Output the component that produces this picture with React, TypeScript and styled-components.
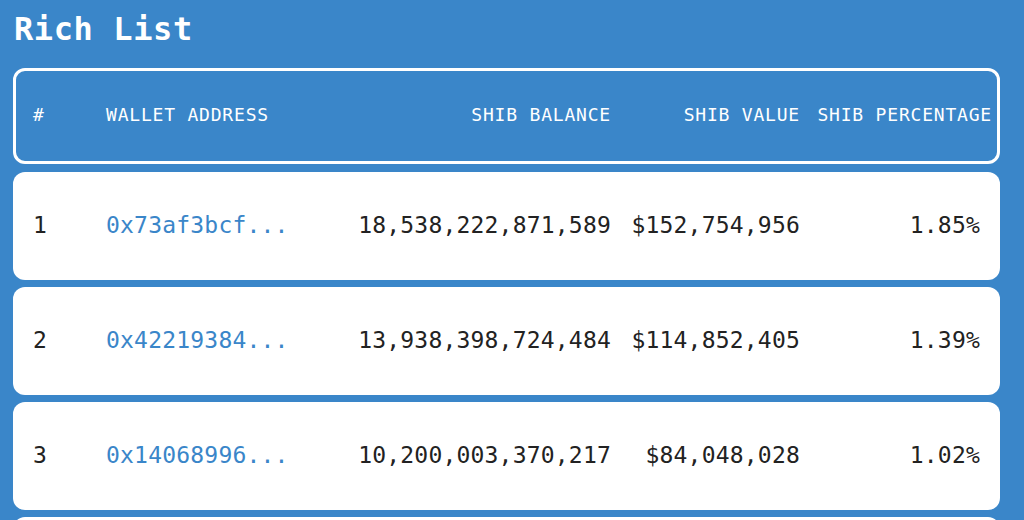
import React from 'react'
import styled, { createGlobalStyle } from 'styled-components'

type Holder = {
    rank: number
    address: string
    balance: string
    value: string
    percentage: string
}

const holders: Holder[] = [
    { rank: 1, address: '0x73af3bcf...', balance: '18,538,222,871,589', value: '$152,754,956', percentage: '1.85%' },
    { rank: 2, address: '0x42219384...', balance: '13,938,398,724,484', value: '$114,852,405', percentage: '1.39%' },
    { rank: 3, address: '0x14068996...', balance: '10,200,003,370,217', value: '$84,048,028', percentage: '1.02%' },
]

const GlobalStyle = createGlobalStyle`
    body {
        margin: 0;
        background: #3a86c9;
        font-family: "DejaVu Sans Mono", "Liberation Mono", monospace;
        overflow: hidden;
    }
`

export default function App() {
    return (
        <>
            <GlobalStyle />
            <Page>
                <Title>Rich List</Title>
                <HeaderRow>
                    <HeadCell>#</HeadCell>
                    <HeadCell>WALLET ADDRESS</HeadCell>
                    <HeadCell $right>SHIB BALANCE</HeadCell>
                    <HeadCell $right>SHIB VALUE</HeadCell>
                    <HeadCell $right>SHIB PERCENTAGE</HeadCell>
                </HeaderRow>
                <List>
                    {holders.map((h) => (
                        <Row key={h.rank}>
                            <Cell>{h.rank}</Cell>
                            <Address href="#">{h.address}</Address>
                            <Cell $right>{h.balance}</Cell>
                            <Cell $right>{h.value}</Cell>
                            <Cell $right>{h.percentage}</Cell>
                        </Row>
                    ))}
                    {/* next row peeks in at the bottom edge */}
                    <Row />
                </List>
            </Page>
        </>
    )
}

const Page = styled.div`
    padding: 0 24px 0 13px;
`

const Title = styled.h1`
    margin: 9px 0 19px 1px;
    font-size: 32px;
    line-height: 40px;
    font-weight: bold;
    letter-spacing: 0.6px;
    color: #ffffff;
`

const columns = `73px 200px 305px 189px 1fr`

const HeaderRow = styled.div`
    box-sizing: border-box;
    display: grid;
    grid-template-columns: ${columns};
    align-items: center;
    height: 96px;
    padding: 0 5px 4px 17px;
    border: 3px solid #ffffff;
    border-radius: 12px;
    margin-bottom: 8px;
`

const HeadCell = styled.div<{ $right?: boolean }>`
    font-size: 18px;
    letter-spacing: 0.8px;
    color: #ffffff;
    text-align: ${(p) => (p.$right ? 'right' : 'left')};
    white-space: nowrap;
`

const List = styled.div`
    display: flex;
    flex-direction: column;
    gap: 7px;
`

const Row = styled.div`
    box-sizing: border-box;
    display: grid;
    grid-template-columns: ${columns};
    align-items: center;
    height: 108px;
    padding: 0 20px 3px;
    background: #ffffff;
    border-radius: 12px;
`

const Cell = styled.div<{ $right?: boolean }>`
    font-size: 23px;
    letter-spacing: 0.2px;
    color: #222222;
    text-align: ${(p) => (p.$right ? 'right' : 'left')};
    white-space: nowrap;
`

const Address = styled.a`
    font-size: 23px;
    letter-spacing: 0.2px;
    color: #3a86c9;
    text-decoration: none;
    white-space: nowrap;
`
